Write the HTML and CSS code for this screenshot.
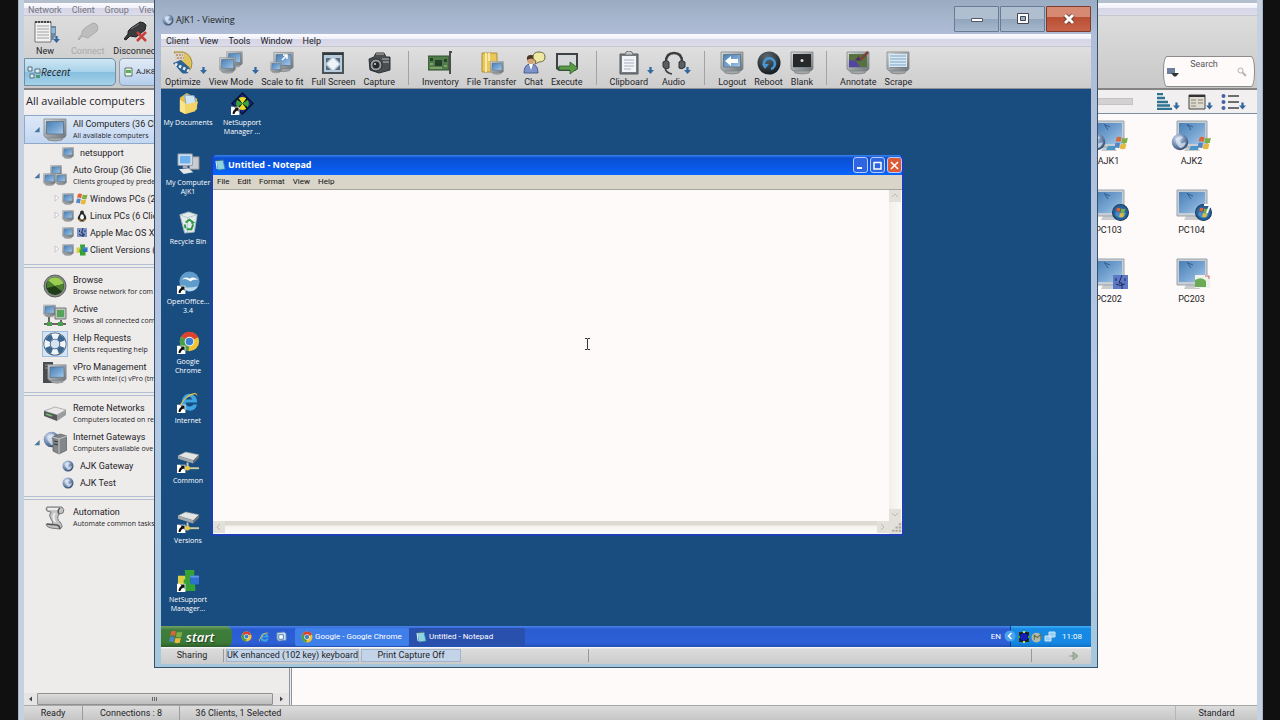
FILE: index.html
```html
<!DOCTYPE html>
<html lang="en">

<head>
    <meta charset="UTF-8">
    <meta name="viewport" content="width=device-width, initial-scale=1.0">
    <title>AJK1 - Viewing</title>
    <link rel="stylesheet" href="styles.css">
</head>

<body>
    <!-- Shared icons -->
    <svg class="defs" width="0" height="0" aria-hidden="true">
        <defs>
            <linearGradient id="screen" x1="0" y1="0" x2="1" y2="1">
                <stop offset="0" stop-color="#4a7fb5"/><stop offset=".6" stop-color="#7ba8d4"/><stop offset="1" stop-color="#a9cbe8"/>
            </linearGradient>
            <linearGradient id="case" x1="0" y1="0" x2="1" y2="1">
                <stop offset="0" stop-color="#d8dbdd"/><stop offset="1" stop-color="#6d7478"/>
            </linearGradient>
            <radialGradient id="globe" cx=".35" cy=".3" r=".8">
                <stop offset="0" stop-color="#d3dff0"/><stop offset=".6" stop-color="#647fa8"/><stop offset="1" stop-color="#2c3f60"/>
            </radialGradient>
            <radialGradient id="ball" cx=".4" cy=".25" r=".8">
                <stop offset="0" stop-color="#5d6a72"/><stop offset="1" stop-color="#12181c"/>
            </radialGradient>
        </defs>
        <symbol id="monitor" viewBox="0 0 24 24">
            <path d="M4 18q8 3 16 0l-1 4q-7 2-14 0z" fill="#a5a9ab" stroke="#777b7d" stroke-width=".7"/>
            <path d="M1 1h22v17l-2 2H3l-2-2z" fill="url(#case)" stroke="#81888c" stroke-width=".8"/>
            <path d="M3.5 3.500h17v12.500h-17z" fill="url(#screen)" stroke="#56687a" stroke-width=".7"/>
        </symbol>
        <symbol id="down" viewBox="0 0 8 8"><path d="M2.700 0h2.600v3.500H8L4 8 0 3.500h2.700z" fill="#33679f"/></symbol>
        <symbol id="shortcut" viewBox="0 0 8 8"><path d="M0 0h8v8H0z" fill="#fff"/><path d="M3 1h4v4L5.700 3.800Q3.500 5 3.200 7H1.500Q1.400 4 4.200 2.300z" fill="#111"/></symbol>
        <symbol id="windows" viewBox="0 0 12 12">
            <path d="M2 1q2-1 4 .2L5 5.400Q3 4 1 5z" fill="#dc6436"/><path d="M6.800 1.500q2 1 4.700 0L10.500 6q-2.500.8-4.600-.3z" fill="#7fae45"/>
            <path d="M.8 6q2-1 4 .2L3.800 10.500Q2 9.300 0 10.200z" fill="#4f86c8"/><path d="M5.600 6.600q2 1 4.600 0L9.200 11q-2.500.8-4.600-.3z" fill="#e9b83a"/>
        </symbol>
        <symbol id="chrome" viewBox="0 0 24 24">
            <circle cx="12" cy="12" r="11" fill="#f1c232"/>
            <path d="M12 12L2.500 6.500A11 11 0 0 1 22 7z" fill="#d9432f"/><path d="M12 12L2.500 6.500A11 11 0 0 0 11 23z" fill="#4b9e48"/>
            <circle cx="12" cy="12" r="5.500" fill="#eef3f7"/><circle cx="12" cy="12" r="4.300" fill="#3d7fd0"/>
        </symbol>
        <symbol id="ie" viewBox="0 0 24 24">
            <path d="M21 13H9q1 5 5 4 2 0 3-2h4q-2 7-8 6.500Q4 21 5 12q1-8 8-8 8 1 8 9zM9 10h7q-1-3-3.500-3T9 10z" fill="#3fa4e2"/>
            <path d="M4 21Q0 21 4 14 10 4 18 3q4 0 3 4 0-3-3-2.500Q9 7 5 15q-2 5-1 6z" fill="#e6bf45"/>
        </symbol>
        <symbol id="globe-sm" viewBox="0 0 12 12">
            <circle cx="6" cy="6" r="5.500" fill="url(#globe)"/><path d="M3 4q3-3 5-1L6 5l1 2 3-1q-1 4-4 4-3-3-3-6z" fill="#dfe8f3" opacity=".75"/>
        </symbol>
        <symbol id="notepad" viewBox="0 0 12 12">
            <path d="M2 2l7-1 2 9-7 1z" fill="#8fd3e3" stroke="#3f86a5" stroke-width=".8"/><path d="M2 2l1 8" stroke="#d8f2f7"/><path d="M2.500 1.500L9 1" stroke="#555" stroke-dasharray="1 1"/>
        </symbol>
        <symbol id="nsm" viewBox="0 0 24 24">
            <path d="M12 1l11 11-11 11L1 12z" fill="#1c2a8c" stroke="#0b1236" stroke-width="1.500"/>
            <circle cx="12" cy="12" r="7" fill="#111"/><path d="M12 12L8 6.500q4-2.500 8 0zM12 12l-4 5.500q4 2.500 8 0z" fill="#e6dc2c"/><path d="M12 12L6.500 8q-2.500 4 0 8zM12 12l5.500-4q2.500 4 0 8z" fill="#3aa63a"/>
        </symbol>
        <symbol id="pieces" viewBox="0 0 24 24">
            <path d="M1 7h8v11H1z" fill="#d7cf45"/><path d="M8 1h10v8h-4v5h5v9H8v-7h-1v-5h2z" fill="#34a234"/><path d="M14 7h9v9h-9z" fill="#2f6fd0"/><path d="M14 7h9v2h-9z" fill="#5f95e5"/>
        </symbol>
        <symbol id="drive" viewBox="0 0 24 24">
            <path d="M1 6l8-4 14 3-6 6z" fill="#e3e4e4" stroke="#8c9194" stroke-width=".6"/><path d="M1 6l16 5v3L1 9z" fill="#a3a8aa"/><path d="M17 11l6-6v3l-6 6z" fill="#6e7375"/>
            <path d="M11 13v5" stroke="#c8c8c8" stroke-width="2"/><path d="M6 19h17" stroke="#cfc9a0" stroke-width="2"/><circle cx="11" cy="19" r="2.500" fill="#e9c83c"/>
        </symbol>
        <symbol id="pc" viewBox="0 0 36 34">
            <path d="M12 27h12l2 4H10z" fill="#c9cccf"/><path d="M3 1h30v26H3z" fill="#c8ced4" stroke="#99a4ae"/>
            <path d="M5 3h26v21H5z" fill="url(#screen)"/><path d="M13 4l4 6M14 5l5 2" stroke="#305d92"/>
        </symbol>
        <symbol id="orb" viewBox="0 0 16 16"><circle cx="8" cy="8" r="7.500" fill="#26619a" stroke="#1c3d5e"/><path d="M3 8h10q-1 5-5 5T3 8z" fill="#3fa4c8"/><use href="#windows" x="3" y="3" width="10" height="10"/></symbol>
    </svg>

    <main class="control">
        <div class="control-top"></div>
        <nav class="menubar faded">
            <button>Network</button>
            <button>Client</button>
            <button>Group</button>
            <button>View</button>
        </nav>
        <header class="control-head">
            <div class="control-left">
                <div class="toolbar">
                    <button class="tool has-menu">
                        <svg class="icon" viewBox="0 0 24 24"><path d="M14 6h9v9l-3 5h-6z" fill="#6f8aa3"/><path d="M16 8h6v5h-6z" fill="#8fb9df"/><path d="M2 2h16v20H2z" fill="#f2f2f2" stroke="#777"/><path d="M2 2h16" stroke="#444" stroke-width="2" stroke-dasharray="2 1"/><path d="M4 6h12M4 9h12M4 12h12M4 15h12M4 18h12" stroke="#a0a0a0"/></svg>
                        <svg class="drop"><use href="#down"/></svg>
                        <span>New</span>
                    </button>
                    <button class="tool disabled">
                        <svg class="icon" viewBox="0 0 24 24"><path d="M2 19l4-5q-1-3 3-6l8-5q4 0 5 4l-1 4-9 7-6-2-3 4z" fill="#bdbdbd" stroke="#aaa"/></svg>
                        <span>Connect</span>
                    </button>
                    <button class="tool">
                        <svg class="icon" viewBox="0 0 24 24"><path d="M0 19l4-5q-1-3 3-6l9-6q4 0 6 3l-1 5-9 7-6-1-4 4z" fill="#3b3c3e" stroke="#222"/><path d="M7 9l8-5" stroke="#777"/><path d="M13 12l9 9M22 12l-9 9" stroke="#c8403a" stroke-width="2.500"/></svg>
                        <span>Disconnect</span>
                    </button>
                </div>
                <div class="tabs">
                    <button class="tab active">
                        <svg width="14" height="14" viewBox="0 0 14 14"><path d="M1 2h4v4H1zM8 4h5v4H8zM3 9h4v4H3z" fill="#dcecf2" stroke="#56707c"/><path d="M9 10h4v3H9z" fill="#4c9a70"/></svg>
                        Recent
                    </button>
                    <button class="tab">
                        <svg width="9" height="10" viewBox="0 0 9 10"><path d="M1 1h7v8H1z" fill="#eef5ee" stroke="#55745e"/><path d="M2 3h5v3H2z" fill="#5daf58"/></svg>
                        AJK8
                    </button>
                </div>
            </div>
            <form class="search">
                <svg width="12" height="10" viewBox="0 0 12 10"><path d="M0 1h8v6H0z" fill="#6c7f9d"/><path d="M4 6h8L9 9.500H7z" fill="#333"/></svg>
                <input type="text" placeholder="Search" aria-label="Search">
                <svg width="10" height="10" viewBox="0 0 10 10" fill="none" stroke="#b5b0ae"><circle cx="3.500" cy="3.500" r="2.500"/><path d="M5.500 5.500L9 9" stroke-width="2"/></svg>
            </form>
        </header>

        <div class="control-body">
            <aside class="sidebar">
                <h2>All available computers</h2>
                <nav class="tree">
                    <section class="group">
                        <a href="#" class="node selected">
                            <svg class="twist" viewBox="0 0 8 8"><path d="M7 1v6H1z" fill="#49749b"/></svg>
                            <svg class="pic"><use href="#monitor"/></svg>
                            <span class="label">All Computers (36 Cl<small>All available computers</small></span>
                        </a>
                        <a href="#" class="node sub">
                            <span class="twist"></span>
                            <svg class="pic"><use href="#monitor"/></svg>
                            <span class="label">netsupport</span>
                        </a>
                        <a href="#" class="node">
                            <svg class="twist" viewBox="0 0 8 8"><path d="M7 1v6H1z" fill="#49749b"/></svg>
                            <svg class="pic" viewBox="0 0 24 24"><use href="#monitor" x="7" y="1" width="12" height="12"/><use href="#monitor" y="9" width="13" height="13"/><use href="#monitor" x="12" y="9" width="12" height="13"/></svg>
                            <span class="label">Auto Group (36 Clie<small>Clients grouped by prede</small></span>
                        </a>
                        <a href="#" class="node sub os">
                            <svg class="twist" viewBox="0 0 8 8"><path d="M3 0l4 3-4 4z" fill="#fff" stroke="#aaa" stroke-width=".7"/></svg>
                            <svg class="pic"><use href="#monitor"/></svg>
                            <svg class="pic"><use href="#windows"/></svg>
                            <span class="label">Windows PCs (2</span>
                        </a>
                        <a href="#" class="node sub os">
                            <svg class="twist" viewBox="0 0 8 8"><path d="M3 0l4 3-4 4z" fill="#fff" stroke="#aaa" stroke-width=".7"/></svg>
                            <svg class="pic"><use href="#monitor"/></svg>
                            <svg class="pic" viewBox="0 0 12 12"><path d="M6 .5q2 0 2 3 3 3 2 6l-2 2H4L2 9.500q-1-2 2-6 0-3 2-3z" fill="#2a2a2a"/><path d="M6 4q2 1 2 4l-2 2-2-2q0-3 2-4z" fill="#fff"/><path d="M2 9.500h3l-1 2zM7 9.500h3l-2 2z" fill="#e4a02c"/></svg>
                            <span class="label">Linux PCs (6 Clie</span>
                        </a>
                        <a href="#" class="node sub os">
                            <span class="twist"></span>
                            <svg class="pic"><use href="#monitor"/></svg>
                            <svg class="pic" viewBox="0 0 12 12"><path d="M1 1h10v9H1z" fill="#7d95c8"/><path d="M7 1L5.500 6H7v4M3.500 3v2M9 3v2M3 7.500q3 2 6 0" fill="none" stroke="#27325e"/></svg>
                            <span class="label">Apple Mac OS X</span>
                        </a>
                        <a href="#" class="node sub os">
                            <svg class="twist" viewBox="0 0 8 8"><path d="M3 0l4 3-4 4z" fill="#fff" stroke="#aaa" stroke-width=".7"/></svg>
                            <svg class="pic"><use href="#monitor"/></svg>
                            <svg class="pic"><use href="#pieces"/></svg>
                            <span class="label">Client Versions (</span>
                        </a>
                    </section>
                    <section class="group">
                        <a href="#" class="node">
                            <span class="twist"></span>
                            <svg class="pic" viewBox="0 0 24 24"><circle cx="12" cy="12" r="11" fill="#888c88" stroke="#5d615d"/><circle cx="12" cy="12" r="9" fill="#1f3d16"/><path d="M12 12L5 6.500A9 9 0 0 1 20.500 10z" fill="#9bcf52"/><path d="M12 12L4 14q-1-4 1-7.500zM12 12l8.500-2q1 4-2 7z" fill="#4d8030"/></svg>
                            <span class="label">Browse<small>Browse network for com</small></span>
                        </a>
                        <a href="#" class="node">
                            <span class="twist"></span>
                            <svg class="pic" viewBox="0 0 24 24"><path d="M1 21h22M6 14v6M18 17v3" stroke="#666" stroke-width="2"/><path d="M4 19h5v4H4zM15 19h5v4h-5z" fill="#4c9e4c"/><use href="#monitor" y="1" width="13" height="14"/><path d="M12 5h11v11H12z" fill="#bcc4bc" stroke="#777"/><path d="M14 7h7v7h-7z" fill="#55a45c"/></svg>
                            <span class="label">Active<small>Shows all connected com</small></span>
                        </a>
                        <a href="#" class="node">
                            <span class="twist"></span>
                            <svg class="pic boxed" viewBox="0 0 24 24"><circle cx="12" cy="12" r="8" fill="none" stroke="#33506a" stroke-width="7"/><circle cx="12" cy="12" r="8" fill="none" stroke="#f1f4f6" stroke-width="5.500"/><circle cx="12" cy="12" r="8" fill="none" stroke="#3b6790" stroke-width="5.500" stroke-dasharray="6.300 6.270" stroke-dashoffset="-3.100"/></svg>
                            <span class="label">Help Requests<small>Clients requesting help</small></span>
                        </a>
                        <a href="#" class="node">
                            <span class="twist"></span>
                            <svg class="pic" viewBox="0 0 24 24"><path d="M0 1h10v21H0z" fill="#4a4d4f"/><path d="M2 4h6M2 7h6" stroke="#999"/><use href="#monitor" x="4" y="3" width="20" height="20"/></svg>
                            <span class="label">vPro Management<small>PCs with Intel (c) vPro (tm</small></span>
                        </a>
                    </section>
                    <section class="group">
                        <a href="#" class="node">
                            <span class="twist"></span>
                            <svg class="pic" viewBox="0 0 24 24"><path d="M1 9l11-4 11 3-9 5z" fill="#e8e8e8" stroke="#999" stroke-width=".7"/><path d="M1 9l13 4v6L1 14z" fill="#55595b"/><path d="M14 13l9-5v5l-9 6z" fill="#9a9d9f"/><path d="M3 12l6 2" stroke="#6fc06f" stroke-width="1.500"/></svg>
                            <span class="label">Remote Networks<small>Computers located on re</small></span>
                        </a>
                        <a href="#" class="node">
                            <svg class="twist" viewBox="0 0 8 8"><path d="M7 1v6H1z" fill="#49749b"/></svg>
                            <svg class="pic" viewBox="0 0 24 24"><use href="#globe-sm" width="17" height="17"/><path d="M10 6l7-3 7 2v14l-8 4-6-3z" fill="#83878a" stroke="#55595c" stroke-width=".7"/><path d="M10 6l6 2 8-3M16 8v15" stroke="#c4c8ca" fill="none"/><path d="M11 10l4 1M11 13l4 1" stroke="#333"/></svg>
                            <span class="label">Internet Gateways<small>Computers available ove</small></span>
                        </a>
                        <a href="#" class="node sub">
                            <span class="twist"></span>
                            <svg class="pic"><use href="#globe-sm"/></svg>
                            <span class="label">AJK Gateway</span>
                        </a>
                        <a href="#" class="node sub">
                            <span class="twist"></span>
                            <svg class="pic"><use href="#globe-sm"/></svg>
                            <span class="label">AJK Test</span>
                        </a>
                    </section>
                    <section class="group">
                        <a href="#" class="node">
                            <span class="twist"></span>
                            <svg class="pic" viewBox="0 0 24 24"><path d="M4 1h15q3 2 1 6l-4 1q-3 5 1 8 4 5 0 7l-9-1q-5-1-5-4l6 1q2-3-1-6-3-4 0-7L4 5q-2-2 0-4z" fill="#c4c4c4" stroke="#777"/><path d="M5 3h11M12 7q-3 4 0 9" stroke="#eee" stroke-width="2" fill="none"/><path d="M17 2q-3 2-1 6M4 18l10 1q3 1 3 4" fill="none" stroke="#555" stroke-width="1.500"/></svg>
                            <span class="label">Automation<small>Automate common tasks</small></span>
                        </a>
                    </section>
                </nav>
                <div class="scroll">
                    <svg width="13" height="12" viewBox="0 0 13 12"><path d="M8 3.500v5L5 6z" fill="#444"/></svg>
                    <div class="thumb"></div>
                    <svg width="16" height="12" viewBox="0 0 16 12"><path d="M7 3.500v5L10 6z" fill="#444"/></svg>
                </div>
            </aside>

            <section class="clients">
                <div class="view-tools">
                    <div class="zoom-bar"></div>
                    <button aria-label="Sort"><svg width="16" height="17" viewBox="0 0 16 17"><path d="M0 1h6M0 5h8M0 9h11M0 12.500h13M0 16h15" stroke="#2f7391" stroke-width="2.500"/></svg><svg class="drop-in"><use href="#down"/></svg></button>
                    <button aria-label="View"><svg width="18" height="16" viewBox="0 0 18 16"><path d="M1 1h16v14H1z" fill="#dedad0" stroke="#444"/><path d="M1 2h16" stroke="#333" stroke-width="2"/><path d="M3 6h5M3 9h5M3 12h5M10 6h5M10 9h5" stroke="#8b8777"/></svg><svg class="drop-in"><use href="#down"/></svg></button>
                    <button aria-label="List"><svg width="18" height="17" viewBox="0 0 18 17"><path d="M7 3h11M7 9h11M7 15h11" stroke="#444" stroke-width="1.500"/><g fill="#4862a8"><circle cx="2.500" cy="3" r="2"/><circle cx="2.500" cy="9" r="2"/><circle cx="2.500" cy="15" r="2"/></g></svg><svg class="drop-in"><use href="#down"/></svg></button>
                </div>
                <div class="pc-grid">
                    <figure><svg viewBox="0 0 42 34"><use href="#pc" x="3" width="36" height="34"/><use href="#globe-sm" y="13" width="18" height="18"/><path d="M20 26h7v4h-9z" fill="#4a96c4"/><use href="#windows" x="26" y="16" width="15" height="14"/></svg><figcaption>AJK1</figcaption></figure>
                    <figure><svg viewBox="0 0 42 34"><use href="#pc" x="3" width="36" height="34"/><use href="#globe-sm" y="13" width="18" height="18"/><path d="M20 26h7v4h-9z" fill="#4a96c4"/><use href="#windows" x="26" y="16" width="15" height="14"/></svg><figcaption>AJK2</figcaption></figure>
                    <figure><svg viewBox="0 0 42 34"><use href="#pc" x="3" width="36" height="34"/><use href="#orb" x="24" y="15" width="17" height="17"/></svg><figcaption>PC103</figcaption></figure>
                    <figure><svg viewBox="0 0 42 34"><use href="#pc" x="3" width="36" height="34"/><use href="#orb" x="24" y="15" width="17" height="17"/><path d="M33 16h6l-3 8" fill="none" stroke="#fff" stroke-width="2"/></svg><figcaption>PC104</figcaption></figure>
                    <figure><svg viewBox="0 0 42 34"><use href="#pc" x="3" width="36" height="34"/><path d="M25 17h15v14H25z" fill="#5d78c4"/><path d="M34 17l-3 8h3v6M28 20v3M37 20v3M28 26q4 3 9 0" stroke="#1f2a5c" fill="none"/></svg><figcaption>PC202</figcaption></figure>
                    <figure><svg viewBox="0 0 42 34"><use href="#pc" x="3" width="36" height="34"/><path d="M24 17h15v13H24z" fill="#eef2ea"/><path d="M24 22q7-4 11 1v6H24z" fill="#6cab55"/><path d="M34 18h4v3" stroke="#c66" fill="none"/></svg><figcaption>PC203</figcaption></figure>
                </div>
            </section>
        </div>

        <footer class="status">
            <span class="s1">Ready</span>
            <span class="s2">Connections : 8</span>
            <span class="s3">36 Clients, 1 Selected</span>
            <span class="s4">Standard</span>
        </footer>
    </main>

    <div class="viewer">
        <div class="caption">
            <svg width="12" height="12"><use href="#globe-sm"/></svg>
            <h1>AJK1 - Viewing</h1>
            <button aria-label="Minimize"><svg width="14" height="12" viewBox="0 0 14 12"><path d="M1.500 5.500h11v3h-11z" fill="#fff" stroke="#556"/></svg></button>
            <button aria-label="Maximize"><svg width="14" height="12" viewBox="0 0 14 12"><path d="M1.500.5h11v10h-11z" fill="#fff" stroke="#445"/><path d="M4.500 3.500h5v4h-5z" fill="#9db0c6" stroke="#445"/></svg></button>
            <button class="close" aria-label="Close"><svg width="14" height="12" viewBox="0 0 14 12"><path d="M3 2l8 8M11 2l-8 8" stroke="#5c2a22" stroke-width="4.500"/><path d="M3 2l8 8M11 2l-8 8" stroke="#fff" stroke-width="3"/></svg></button>
        </div>
        <nav class="menubar">
            <button>Client</button>
            <button>View</button>
            <button>Tools</button>
            <button>Window</button>
            <button>Help</button>
        </nav>
        <div class="toolbar">
            <button class="tool has-menu">
                <svg class="icon" viewBox="0 0 24 24"><path d="M3 1h9q8 2 9 11 0 6-4 9z" fill="#dfc35c" stroke="#a28a3c"/><path d="M4 2h9v7H4z" fill="#d9d2c4"/><path d="M2 12l8-3 9 8-2 5q-4 1-6 0z" fill="#2f6292"/><path d="M4 13l14 7" stroke="#e6eef4" stroke-width="3" stroke-dasharray="2.500 2"/><path d="M5 4h7M6 7h7" stroke="#a8674a" stroke-dasharray="2 1"/></svg>
                <svg class="drop"><use href="#down"/></svg>
                <span>Optimize</span>
            </button>
            <button class="tool has-menu">
                <svg class="icon" viewBox="0 0 24 24"><use href="#monitor" x="7" width="17" height="17"/><use href="#monitor" y="6" width="17" height="17"/></svg>
                <svg class="drop"><use href="#down"/></svg>
                <span>View Mode</span>
            </button>
            <button class="tool">
                <svg class="icon" viewBox="0 0 24 24"><use href="#monitor" x="3" width="21" height="22"/><use href="#monitor" y="10" width="12" height="13"/><path d="M12 9l5-5M13 4h4v4" stroke="#fff" stroke-width="1.500" fill="none"/></svg>
                <span>Scale to fit</span>
            </button>
            <button class="tool">
                <svg class="icon" viewBox="0 0 24 24"><path d="M2 2h20v20H2z" fill="#b8cbdc" stroke="#4b5358" stroke-width="2"/><path d="M2 3h20" stroke="#333a3e" stroke-width="2"/><path d="M5 7h5l-5 5zM19 7h-5l5 5zM5 19h5l-5-5zM19 19h-5l5-5z" fill="#5d6d7a"/><path d="M12 7l6 6-6 6-6-6z" fill="#edf3f8"/></svg>
                <span>Full Screen</span>
            </button>
            <button class="tool">
                <svg class="icon" viewBox="0 0 24 24"><path d="M2 8l5-2 2-4h8l2 4h4v13l-11 3-9-3z" fill="#4b4e50" stroke="#2e3032"/><path d="M9 3h8M15 8h7M16 11h6" stroke="#bbb"/><circle cx="9" cy="14" r="6" fill="#9a9da0" stroke="#27292b"/><circle cx="9" cy="14" r="3.500" fill="#26292b"/><circle cx="8" cy="13" r="1" fill="#ddd"/></svg>
                <span>Capture</span>
            </button>
            <div class="sep"></div>
            <button class="tool">
                <svg class="icon" viewBox="0 0 24 24"><path d="M0 5h21v14H0z" fill="#4f7d4a" stroke="#33532f"/><path d="M7 9h7v6H7zM2 7h3v3H2zM16 8h3v3h-3z" fill="#26402a"/><path d="M2 13h3M16 15h3M2 17h12" stroke="#b4c48a"/><path d="M24 1h-2v22" stroke="#4a4d4f" stroke-width="2" fill="none"/></svg>
                <span>Inventory</span>
            </button>
            <button class="tool">
                <svg class="icon" viewBox="0 0 24 24"><path d="M2 2h15v19H2z" fill="#e9c75a" stroke="#ae9038"/><path d="M6 2v19M9 2v8" stroke="#f8e9a6" stroke-width="2"/><use href="#monitor" x="10" y="10" width="14" height="14"/></svg>
                <span>File Transfer</span>
            </button>
            <button class="tool">
                <svg class="icon" viewBox="0 0 24 24"><path d="M2 22q0-9 7-9t7 9z" fill="#7d93c9" stroke="#4c5e92"/><path d="M7 13h4l-2 6z" fill="#fff"/><circle cx="9" cy="9" r="4" fill="#d6a578"/><path d="M5 9q-1-5 4-5t4 5q-4-3-8 0z" fill="#4a3426"/><path d="M17 1q6 0 6 5t-6 5l-4 2 1-3q-3-1-3-4 0-5 6-5z" fill="#eee9a2" stroke="#6d6a42"/></svg>
                <span>Chat</span>
            </button>
            <button class="tool">
                <svg class="icon" viewBox="0 0 24 24"><path d="M1 2h22v16l-3 2H4l-3-2z" fill="#3e4246"/><path d="M3 4h18v12H3z" fill="#d5d8da"/><path d="M4 15h11v-4l8 6-8 6v-4H4z" fill="#5b9b48" stroke="#30602a" stroke-width=".8"/></svg>
                <span>Execute</span>
            </button>
            <div class="sep"></div>
            <button class="tool has-menu">
                <svg class="icon" viewBox="0 0 24 24"><path d="M3 3h18v20H3z" fill="#777c83" stroke="#54585c"/><path d="M5 5h14v16H5z" fill="#f2f4f7"/><path d="M8 4q0-4 4-4t4 4z" fill="#c3c5c7" stroke="#777"/><path d="M7 9h10M7 12h10M7 15h10M7 18h7" stroke="#a9b2bf"/></svg>
                <svg class="drop"><use href="#down"/></svg>
                <span>Clipboard</span>
            </button>
            <button class="tool has-menu wide">
                <svg class="icon" viewBox="0 0 24 24"><path d="M4 11q0-9 8-9t8 9" fill="none" stroke="#3c3f41" stroke-width="2.500"/><path d="M1 11q4-3 6 0v6q-3 2-6-1zM23 11q-4-3-6 0v6q3 2 6-1z" fill="#5a5e61" stroke="#303335"/><path d="M3 17q1 5 7 6" fill="none" stroke="#3c3f41" stroke-width="1.500"/></svg>
                <svg class="drop"><use href="#down"/></svg>
                <span>Audio</span>
            </button>
            <div class="sep"></div>
            <button class="tool">
                <svg class="icon" viewBox="0 0 24 24"><use href="#monitor" width="24" height="24"/><path d="M5 10l6-5v3h7v4h-7v3z" fill="#fff"/></svg>
                <span>Logout</span>
            </button>
            <button class="tool">
                <svg class="icon" viewBox="0 0 24 24"><circle cx="12" cy="12" r="11.500" fill="url(#ball)"/><path d="M8 16a5.500 5.500 0 1 1 6 2" fill="none" stroke="#4597d6" stroke-width="2.500"/><path d="M5 13h7l-4 5z" fill="#4597d6"/></svg>
                <span>Reboot</span>
            </button>
            <button class="tool">
                <svg class="icon" viewBox="0 0 24 24"><use href="#monitor" width="24" height="24"/><path d="M3 3h18v13H3z" fill="#26282a"/><circle cx="12" cy="9.500" r="1.500" fill="#ddd"/></svg>
                <span>Blank</span>
            </button>
            <div class="sep"></div>
            <button class="tool">
                <svg class="icon" viewBox="0 0 24 24"><use href="#monitor" width="24" height="24"/><path d="M3 3h18v13H3z" fill="#57703f"/><path d="M3 9l7 1 4 6H3z" fill="#5145a0"/><path d="M9 9l4-4 2 5z" fill="#4b2f6c"/><path d="M14 9l8-8" stroke="#7d3f3a" stroke-width="2.500"/></svg>
                <span>Annotate</span>
            </button>
            <button class="tool">
                <svg class="icon" viewBox="0 0 24 24"><use href="#monitor" width="24" height="24"/><path d="M3 3h18v13H3z" fill="#dbe8f2"/><path d="M4 5h16M4 8h16M4 11h16M4 14h16" stroke="#78a5c8"/></svg>
                <span>Scrape</span>
            </button>
        </div>

        <div class="desktop">
            <div class="shortcuts">
                <button class="shortcut">
                    <svg viewBox="0 0 24 24"><path d="M3 6l7-5 4 2 7 4v11L8 23l-5-3z" fill="#e6c04d"/><path d="M8 3l10 1 2 9-10 5z" fill="#cfe4f5" stroke="#7fa5c6"/><path d="M3 8l6 4v11l-6-3z" fill="#f8e58e"/><path d="M9 13l13-3-3 10-10 3z" fill="#f2d566"/></svg>
                    <span>My Documents</span>
                </button>
                <button class="shortcut">
                    <svg viewBox="0 0 24 24"><path d="M13 5h10v13H13z" fill="#c9ccd0" stroke="#888"/><path d="M1 2h15v12H1z" fill="#dfe6ee" stroke="#8796a8"/><path d="M3 4h11v8H3z" fill="#6db2ec"/><path d="M2 18l10-1 5 4-10 2z" fill="#e4e6e8"/><path d="M6 14h5v3H6z" fill="#aab"/></svg>
                    <span>My Computer<br>AJK1</span>
                </button>
                <button class="shortcut">
                    <svg viewBox="0 0 24 24"><path d="M3 4l9-3 9 3-3 18-10 1z" fill="#e3ebec" stroke="#a5b8be"/><path d="M3 4l8 3 10-3M11 7v15" fill="none" stroke="#b6c7cc"/><path d="M9 12l4-3 4 3-2 1M17 14l-2 5h-5M9 18l-1-4" fill="none" stroke="#2f9845" stroke-width="2"/></svg>
                    <span>Recycle Bin</span>
                </button>
                <button class="shortcut">
                    <svg viewBox="0 0 24 24"><circle cx="13" cy="11" r="10.500" fill="#5f9ccb"/><path d="M5 9q4-4 8-1 4-3 9 1-5-1-8 2-4-4-9-2z" fill="#fff"/><path d="M3 15q5 4 19 1-4 6-10 5z" fill="#bcd9ed"/><use href="#shortcut" y="15" width="9" height="9"/></svg>
                    <span>OpenOffice...<br>3.4</span>
                </button>
                <button class="shortcut">
                    <svg viewBox="0 0 24 24"><use href="#chrome" x="2" width="22" height="22"/><use href="#shortcut" y="15" width="9" height="9"/></svg>
                    <span>Google<br>Chrome</span>
                </button>
                <button class="shortcut">
                    <svg viewBox="0 0 24 24"><use href="#ie" width="24" height="24"/><use href="#shortcut" y="15" width="9" height="9"/></svg>
                    <span>Internet</span>
                </button>
                <button class="shortcut">
                    <svg viewBox="0 0 24 24"><use href="#drive" width="24" height="24"/><use href="#shortcut" y="15" width="9" height="9"/></svg>
                    <span>Common</span>
                </button>
                <button class="shortcut">
                    <svg viewBox="0 0 24 24"><use href="#drive" width="24" height="24"/><use href="#shortcut" y="15" width="9" height="9"/></svg>
                    <span>Versions</span>
                </button>
                <button class="shortcut">
                    <svg viewBox="0 0 24 24"><use href="#pieces" width="24" height="24"/><use href="#shortcut" y="15" width="9" height="9"/></svg>
                    <span>NetSupport<br>Manager...</span>
                </button>
                <button class="shortcut">
                    <svg viewBox="0 0 24 24"><use href="#nsm" width="24" height="24"/><use href="#shortcut" y="15" width="9" height="9"/></svg>
                    <span>NetSupport<br>Manager ...</span>
                </button>
            </div>

            <div class="notepad">
                <div class="np-title">
                    <svg width="12" height="12"><use href="#notepad"/></svg>
                    <h2>Untitled - Notepad</h2>
                    <button aria-label="Minimize"><svg width="9" height="9"><path d="M1 7h5" stroke="#fff" stroke-width="2"/></svg></button>
                    <button aria-label="Maximize"><svg width="9" height="9"><path d="M1 1.500h7M1 1v7h7V1" fill="none" stroke="#fff" stroke-width="1.500"/></svg></button>
                    <button class="np-close" aria-label="Close"><svg width="9" height="9"><path d="M1 1l7 7M8 1L1 8" stroke="#fff" stroke-width="1.500"/></svg></button>
                </div>
                <nav class="np-menu">
                    <button>File</button>
                    <button>Edit</button>
                    <button>Format</button>
                    <button>View</button>
                    <button>Help</button>
                </nav>
                <div class="np-body">
                    <textarea aria-label="Document text" spellcheck="false"></textarea>
                    <div class="np-bar vertical">
                        <svg width="12" height="12"><path d="M3 7l3-3 3 3" fill="none" stroke="#bbb8b0"/></svg>
                        <svg width="12" height="12"><path d="M3 4l3 3 3-3" fill="none" stroke="#bbb8b0"/></svg>
                    </div>
                    <div class="np-bar">
                        <svg width="12" height="12"><path d="M7 3L4 6l3 3" fill="none" stroke="#bbb8b0"/></svg>
                        <svg width="12" height="12"><path d="M4 3l3 3-3 3" fill="none" stroke="#bbb8b0"/></svg>
                    </div>
                    <svg class="grip" viewBox="0 0 12 12"><path d="M9 3h2M6 6h2M9 6h2M3 9h2M6 9h2M9 9h2" stroke="#aaa69a" stroke-width="2"/></svg>
                    <svg class="ibeam" viewBox="0 0 7 12"><path d="M1 .5h2l.5.5.5-.5h2M3.500 1v10M1 11.500h2l.5-.5.5.5h2" fill="none" stroke="#333"/></svg>
                </div>
            </div>
        </div>

        <div class="taskbar">
            <button class="start"><svg width="14" height="14"><use href="#windows"/></svg>start</button>
            <div class="quick">
                <svg width="11" height="11"><use href="#chrome"/></svg>
                <svg width="12" height="12"><use href="#ie"/></svg>
                <svg width="11" height="11" viewBox="0 0 12 12"><path d="M1 2l8-1 2 2v7l-8 1-2-2z" fill="#cfe2f5" stroke="#5d86b4"/><path d="M3 4h5v5H3z" fill="#fff" stroke="#4777a8"/></svg>
            </div>
            <button class="task"><svg width="12" height="12"><use href="#chrome"/></svg>Google - Google Chrome</button>
            <button class="task current"><svg width="12" height="12"><use href="#notepad"/></svg>Untitled - Notepad</button>
            <span class="lang">EN</span>
            <div class="tray">
                <svg class="expand" viewBox="0 0 12 12"><circle cx="6" cy="6" r="5.500" fill="#49a3ee"/><path d="M7.500 3L4.500 6l3 3" fill="none" stroke="#fff" stroke-width="1.500"/></svg>
                <svg width="12" height="12" viewBox="0 0 12 12"><path d="M1 1h3v3H1zM8 1h3v3H8zM1 8h3v3H1zM8 8h3v3H8z" fill="#27301c"/><circle cx="6" cy="6" r="4.500" fill="#1420b4" stroke="#111"/><path d="M5 0h2v2H5zM5 10h2v2H5z" fill="#e6dc2c"/><path d="M0 5h2v2H0zM10 5h2v2h-2z" fill="#3aa63a"/></svg>
                <svg width="12" height="12" viewBox="0 0 11 11"><circle cx="5" cy="6" r="4.500" fill="#b5b8a8"/><path d="M3 8V4l3 2 3-3v5" fill="none" stroke="#5e7254"/></svg>
                <svg width="12" height="12" viewBox="0 0 12 12"><path d="M5 1h6v5H5zM1 5h6v5H1z" fill="#8fd0f4" stroke="#d9e4ea"/></svg>
                <time>11:08</time>
            </div>
        </div>

        <footer class="v-status">
            <span class="v-share">Sharing</span>
            <span class="cell keys">UK enhanced (102 key) keyboard</span>
            <span class="cell print">Print Capture Off</span>
            <span class="v-gap"></span>
            <span class="v-info"></span>
            <svg class="v-net" viewBox="0 0 12 12"><path d="M1 6h5M5 2l5 4-5 4z" fill="#a4b6a0" stroke="#8f9f8c"/></svg>
        </footer>
    </div>
</body>

</html>
```
FILE: styles.css
```css
* {
    box-sizing: border-box;
}

body {
    margin: 0;
    height: 100vh;
    padding: 0 17px 0 18px;
    background-color: #101010;
    font-family: Roboto, "Open Sans", sans-serif;
    font-size: 9px;
    line-height: 12px;
    color: #242428;
    position: relative;
    overflow: hidden;
}

h1, h2, figure {
    margin: 0;
    font-weight: normal;
}

button {
    font: inherit;
    color: inherit;
    background: none;
    border: 0;
    padding: 0;
    white-space: nowrap;
}

svg {
    display: block;
    flex: none;
}

.defs {
    position: absolute;
}

/* Control window */
.control {
    height: 100%;
    display: flex;
    flex-direction: column;
    background-color: #c5d1e0;
    border-left: 1px solid #a9b5c4;
    border-right: 1px solid #a9b5c4;
    padding: 0 5px;
}

.control-top {
    height: 3px;
    background-color: #b4bfce;
}

.menubar {
    display: flex;
    gap: 10px;
    height: 13px;
    padding: 0 5px;
    background: linear-gradient(#fbfbff 0, #f0f0fa 5px, #d5d5e6 5px, #dcdcec 100%);
    border-bottom: 1px solid #c6c6cc;
}

.menubar button {
    line-height: 14px;
}

.faded {
    color: #77777f;
    padding: 0 4px;
}

.control-head {
    display: flex;
    justify-content: space-between;
    align-items: flex-end;
    background: linear-gradient(#dcdcdc, #c9c9c9);
    border-bottom: 2px solid #858585;
    height: 74px;
}

.toolbar {
    display: flex;
    gap: 8px;
    height: 42px;
    padding: 4px 4px 0;
    background: linear-gradient(#dfdfdf, #cdcdcd);
    border-bottom: 1px solid #8d9298;
}

.control-left .toolbar {
    background: none;
    border: 0;
    gap: 9px;
    padding-left: 12px;
}

.control-left .has-menu {
    margin-right: 8px;
}

.tool {
    display: flex;
    flex-direction: column;
    align-items: center;
    position: relative;
    height: 37px;
}

.tool.wide {
    margin: 0 6px;
}

.tool span {
    padding-top: 1px;
}

.icon {
    width: 24px;
    height: 24px;
    margin: 0 -3px;
}

.disabled {
    color: #a9a9a9;
}

.drop {
    position: absolute;
    right: -6px;
    top: 16px;
    width: 7px;
    height: 7px;
}

.sep {
    width: 1px;
    height: 34px;
    margin: 0 5px;
    background-color: #a3a3a3;
}

.tabs {
    display: flex;
    gap: 3px;
    height: 28px;
    margin-bottom: 2px;
}

.tab {
    display: flex;
    align-items: center;
    gap: 3px;
    width: 60px;
    padding: 0 4px;
    font-size: 8px;
    background: linear-gradient(#e2ebf6, #b4cdec);
    border: 1px solid #8d9fb2;
    border-radius: 4px 0 0 4px;
}

.tab.active {
    width: 92px;
    padding: 0 2px;
    font-family: "Open Sans", sans-serif;
    font-size: 10px;
    font-style: italic;
    gap: 0;
    background: linear-gradient(#cfe6f3, #a6d2ea 50%, #86bfde 50%, #a5d3ea);
    border-color: #6f8fa5;
    border-radius: 0 5px 5px 0;
}

.search {
    display: flex;
    align-items: center;
    width: 92px;
    height: 31px;
    margin: 0 2px 1px 0;
    padding: 0 7px 0 3px;
    background-color: #fffafa;
    border: 1px solid #8b8b8b;
    border-radius: 4px / 14px;
}

.search input {
    flex: 1;
    min-width: 0;
    align-self: flex-start;
    height: 14px;
    padding: 0 8px 0 0;
    border: 0;
    outline: 0;
    background: none;
    font: inherit;
    text-align: center;
}

.search input::placeholder {
    color: #55555a;
}

.control-body {
    flex: 1;
    display: flex;
    min-height: 0;
}

.sidebar {
    width: 268px;
    display: flex;
    flex-direction: column;
    background-color: #eeebeb;
    border-right: 3px double #8f949c;
}

.sidebar h2 {
    height: 24px;
    padding: 0 2px;
    font-family: "Open Sans", sans-serif;
    font-size: 11px;
    line-height: 22px;
    background-color: #f1eff0;
}

.tree {
    flex: 1;
    padding-top: 1px;
}

.group {
    padding: 3px 0 5px;
    border-bottom: 4px double #b3c0d2;
}

.group:first-child {
    padding: 0 0 6px;
}

.group:last-child {
    border-bottom: 0;
}

.node {
    display: flex;
    align-items: center;
    gap: 2px;
    height: 29px;
    padding-left: 9px;
    color: inherit;
    text-decoration: none;
    white-space: nowrap;
}

.node.sub {
    height: 17px;
    padding-left: 28px;
}

.node.selected {
    background: linear-gradient(#dde8f7, #c3d7f1);
    border: 1px solid #8fa9cb;
    padding-left: 8px;
}

.twist {
    width: 8px;
    height: 7px;
}

.pic {
    width: 24px;
    height: 24px;
}

.sub .pic {
    width: 12px;
    height: 12px;
}

.boxed {
    background-color: #d5e4f5;
    outline: 1px solid #9dbcdc;
}

.label {
    margin-left: 4px;
}

.os .label {
    margin-left: 0;
}

.label small {
    display: block;
    font-family: "Open Sans", sans-serif;
    font-size: 7px;
}

.scroll {
    display: flex;
    height: 12px;
    background-color: #e6e4e4;
}

.thumb {
    flex: 1;
    background: linear-gradient(#dcdcdc, #bdbdbd);
    border: 1px solid #919191;
    border-radius: 1px;
}

.thumb::after {
    content: "";
    display: block;
    width: 6px;
    height: 4px;
    margin: 3px auto;
    background: repeating-linear-gradient(90deg, #666 0 1px, transparent 1px 2px);
}

.clients {
    flex: 1;
    background-color: #fefafa;
}

.view-tools {
    display: flex;
    justify-content: flex-end;
    align-items: center;
    gap: 8px;
    height: 24px;
    padding-right: 11px;
    background-color: #f1eff0;
    border-bottom: 1px solid #7d8da0;
}

.view-tools button {
    display: flex;
    align-items: flex-end;
}

.drop-in {
    width: 7px;
    height: 8px;
}

.zoom-bar {
    width: 160px;
    height: 7px;
    margin-right: 16px;
    background-color: #d3d1d1;
    border: 1px solid #c5c3c3;
}

.pc-grid {
    display: grid;
    grid-template-columns: repeat(2, 83px);
    grid-auto-rows: 69px;
    justify-content: end;
    padding: 6px 24px 0 0;
}

.pc-grid figure {
    display: flex;
    flex-direction: column;
    align-items: center;
    gap: 1px;
    color: #222;
}

.pc-grid svg {
    width: 42px;
    height: 34px;
}

.status {
    display: flex;
    height: 15px;
    line-height: 15px;
    text-align: center;
    background: linear-gradient(#dcdcdc, #c6c6c6);
    border-top: 1px solid #a8a8a8;
}

.status span {
    border-right: 1px solid #9b9b9b;
}

.status .s1 {
    width: 59px;
}

.status .s2 {
    width: 97px;
}

.status .s3 {
    width: 117px;
    border: 0;
}

.status .s4 {
    width: 82px;
    margin-left: auto;
    border-left: 1px solid #b5b5b5;
    border-right: 0;
}

/* Viewer window */
.viewer {
    position: absolute;
    top: 0;
    left: 154px;
    right: 182px;
    bottom: 52px;
    display: flex;
    flex-direction: column;
    padding: 0 6px 3px;
    background: linear-gradient(#9aacc2, #afbdd6 34px, #b4c8e4 60%, #a5c7dc);
    border: 1px solid #34506a;
    border-top: 0;
}

.caption {
    display: flex;
    align-items: flex-start;
    gap: 1px;
    height: 34px;
    padding-top: 6px;
}

.caption > svg {
    margin: 8px 1px 0;
}

.caption h1 {
    flex: 1;
    font-family: "Open Sans", sans-serif;
    font-size: 9px;
    line-height: 28px;
    color: #1c1f26;
}

.caption button {
    display: flex;
    align-items: center;
    justify-content: center;
    width: 45px;
    height: 26px;
    background: linear-gradient(#b0bfd0 50%, #90a5bc 50%, #a5b8cd);
    border: 1px solid #687b92;
    border-radius: 1px;
}

.caption .close {
    background: linear-gradient(#d68a74 40%, #b84e32 40%, #c8634a);
    border-color: #7d3b2c;
}

.viewer .menubar {
    color: #222;
}

.desktop {
    flex: 1;
    min-height: 0;
    position: relative;
    background-color: #194d80;
}

.shortcuts {
    display: grid;
    grid-template-rows: repeat(9, 1fr);
    grid-auto-flow: column;
    grid-auto-columns: 54px;
    height: 100%;
}

.shortcut {
    display: flex;
    flex-direction: column;
    align-items: center;
    gap: 3px;
    padding-top: 3px;
    min-height: 0;
    font-family: "Open Sans", sans-serif;
    font-size: 7px;
    line-height: 9px;
    color: #fff;
}

.shortcut svg {
    width: 23px;
    height: 23px;
}

.notepad {
    position: absolute;
    top: 66px;
    left: 50px;
    width: 693px;
    height: 381px;
    display: flex;
    flex-direction: column;
    background-color: #1544cc;
    border: 1px solid #1c3fb4;
    border-width: 0 2px 2px;
    border-radius: 5px 5px 0 0;
    overflow: hidden;
}

.np-title {
    display: flex;
    align-items: center;
    gap: 2px;
    height: 20px;
    padding-left: 1px;
    background: linear-gradient(#3b84f0 0, #0a4fd0 3px, #0a58e6 60%, #0566ff);
    color: #fff;
}

.np-title h2 {
    flex: 1;
    font-family: "Open Sans", sans-serif;
    font-size: 9px;
    font-weight: bold;
}

.np-title button {
    display: flex;
    align-items: center;
    justify-content: center;
    width: 15px;
    height: 16px;
    background-color: #2f66e0;
    border: 1px solid #b5cdf8;
    border-radius: 3px;
}

.np-title .np-close {
    background-color: #dc5a36;
}

.np-menu {
    display: flex;
    gap: 8px;
    height: 15px;
    padding-left: 4px;
    background-color: #d9d5c9;
    border-bottom: 1px solid #a5a49c;
    font-size: 8px;
    color: #111;
}

.np-body {
    flex: 1;
    display: grid;
    grid-template: 1fr 13px / 1fr 13px;
    position: relative;
}

.np-body textarea {
    width: 100%;
    height: 100%;
    padding: 2px;
    border: 0;
    outline: 0;
    resize: none;
    background-color: #fefafa;
}

.np-bar {
    display: flex;
    justify-content: space-between;
    background: linear-gradient(#dcdad2 4px, #f4f3ee 5px, #fdfdfb);
}

.np-bar svg {
    background-color: #e2e0d9;
}

.np-bar.vertical {
    flex-direction: column;
    background: linear-gradient(90deg, #f0efe9, #fbfaf7);
}

.grip {
    width: 13px;
    height: 13px;
    background-color: #e2e0d8;
}

.ibeam {
    position: absolute;
    left: 371px;
    top: 148px;
    width: 7px;
    height: 12px;
}

.taskbar {
    display: flex;
    align-items: center;
    height: 21px;
    background: linear-gradient(#4a86ea 0, #2a5bd0 3px, #2c60d8 80%, #2450b4);
    color: #fff;
    font-size: 8px;
}

.start {
    display: flex;
    align-items: center;
    gap: 3px;
    width: 71px;
    height: 100%;
    padding-left: 8px;
    font-family: "Open Sans", sans-serif;
    font-size: 13px;
    font-style: italic;
    font-weight: 600;
    background: linear-gradient(#6fa268 0, #3f7d3c 4px, #3b7a36 80%, #2c5d2a);
    border-radius: 0 6px 6px 0;
    text-shadow: 1px 1px 1px #1f3d1c;
}

.quick {
    display: flex;
    gap: 6px;
    width: 63px;
    padding-left: 9px;
}

.task {
    display: flex;
    align-items: center;
    gap: 2px;
    width: 114px;
    height: 18px;
    padding-left: 6px;
    background-color: #3f7fea;
    border-radius: 2px;
}

.task.current {
    width: 116px;
    background-color: #2a50ae;
}

.lang {
    margin-left: auto;
    padding-right: 9px;
}

.tray {
    position: relative;
    display: flex;
    align-items: center;
    gap: 1px;
    width: 81px;
    height: 100%;
    padding-left: 7px;
    background: linear-gradient(#3fb0f5 0, #168ae4 3px, #1488e4 80%, #1070c0);
    border-left: 1px solid #0d3f8c;
}

.expand {
    position: absolute;
    left: -7px;
    top: 4px;
    width: 12px;
    height: 12px;
}

.tray time {
    margin-left: 5px;
}

.v-status {
    display: flex;
    align-items: center;
    height: 17px;
    background: linear-gradient(#fff 0, #dcdcdc 2px, #cbcbcb);
    line-height: 13px;
    text-align: center;
}

.v-status span {
    height: 13px;
}

.v-share {
    width: 63px;
    border-right: 1px solid #999;
}

.v-status .cell {
    margin-left: 2px;
    background-color: #c3d4e8;
    border: 1px solid #a0b4cc;
    line-height: 11px;
}

.keys {
    width: 133px;
}

.print {
    width: 100px;
}

.v-gap {
    width: 128px;
    border-right: 1px solid #999;
}

.v-info {
    flex: 1;
    border-right: 1px solid #999;
}

.v-net {
    width: 12px;
    height: 12px;
    margin: 0 11px 0 36px;
}
```
